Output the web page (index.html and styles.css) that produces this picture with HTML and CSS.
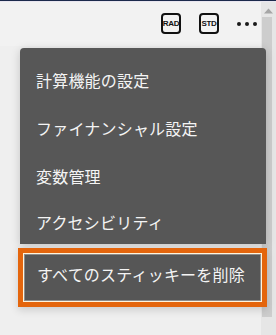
FILE: index.html
```html
<!DOCTYPE html>
<html lang="ja">
<head>
<meta charset="utf-8">
<link rel="stylesheet" href="styles.css">
</head>
<body>
<div class="app">
  <div class="topline"></div>
  <header class="toolbar">
    <span class="mode">RAD</span>
    <span class="mode">STD</span>
    <span class="more"><i></i><i></i><i></i></span>
  </header>
  <div class="scrollbar">
    <svg class="arrow" width="9" height="6" viewBox="0 0 9 6"><path d="M0 5.5 L4.5 0.5 L9 5.5 Z" fill="#a6a6a6"/></svg>
    <div class="thumb"></div>
  </div>
  <ul class="menu">
    <li class="item">計算機能の設定</li>
    <li class="item">ファイナンシャル設定</li>
    <li class="item">変数管理</li>
    <li class="item last">アクセシビリティ</li>
  </ul>
  <div class="focus">
    <div class="focus-inner">すべてのスティッキーを削除</div>
  </div>
</div>
</body>
</html>
```
FILE: styles.css
```css
html, body {
  margin: 0;
  padding: 0;
  width: 276px;
  height: 335px;
  overflow: hidden;
  background: #efefef;
  font-family: "Noto Sans CJK JP", "Noto Sans", sans-serif;
}
.app {
  position: relative;
  width: 276px;
  height: 335px;
  background: #efefef;
}
.topline {
  height: 1px;
  background: #1c2a4c;
  border-bottom: 1px solid #e9e6f0;
}
.toolbar {
  height: 44px;
  display: flex;
  align-items: center;
  padding-left: 161px;
  background: #f2f2f2;
  box-sizing: border-box;
  padding-bottom: 2px;
}
.mode {
  width: 20px;
  height: 21px;
  box-sizing: border-box;
  border: 2px solid #111;
  border-radius: 4px;
  display: flex;
  align-items: center;
  justify-content: center;
  font-family: "Liberation Sans", Arial, sans-serif;
  font-weight: bold;
  font-size: 8px;
  letter-spacing: -0.3px;
  color: #111;
  margin-right: 18px;
}
.more {
  display: flex;
  gap: 4px;
  padding-top: 2px;
}
.more i {
  width: 4px;
  height: 4px;
  border-radius: 50%;
  background: #1a1a1a;
}
.scrollbar {
  position: absolute;
  top: 2px;
  right: 0;
  width: 15px;
  height: 333px;
  background: #e6e6e6;
}
.scrollbar .arrow {
  position: absolute;
  top: 6px;
  left: 3px;
}
.thumb {
  position: absolute;
  top: 15px;
  left: 1px;
  width: 10px;
  height: 300px;
  background: #cdcdcd;
}
.menu {
  position: relative;
  list-style: none;
  margin: 2px 0 0 20px;
  padding: 8px 0 0;
  width: 246px;
  background: #575757;
  border-radius: 4px 4px 0 0;
  box-shadow: 0 2px 10px rgba(0,0,0,0.18);
  z-index: 2;
}
.item {
  height: 48px;
  display: flex;
  align-items: center;
  padding-left: 16px;
  color: #f4f4f4;
  font-size: 16px;
  letter-spacing: 0.2px;
}
.item.last {
  height: 44px;
}
.focus {
  position: relative;
  z-index: 2;
  margin: 4px 0 0 18px;
  width: 249px;
  height: 59px;
  box-sizing: border-box;
  border: 5px solid #e4650c;
  box-shadow: 0 3px 8px rgba(0,0,0,0.15);
  background: #fff4dc;
  padding: 1px;
}
.focus-inner {
  height: 100%;
  box-sizing: border-box;
  border: 1px solid #8c8c8c;
  background: #565656;
  display: flex;
  align-items: center;
  padding: 0 0 7px 12px;
  color: #f4f4f4;
  font-size: 16px;
  letter-spacing: 0.2px;
}
```
